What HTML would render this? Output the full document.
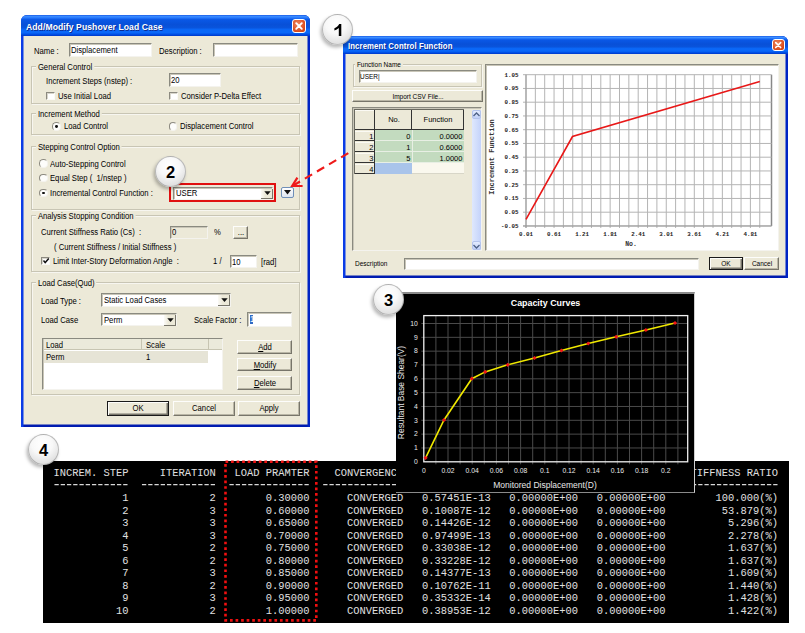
<!DOCTYPE html>
<html><head><meta charset="utf-8"><style>
html,body{margin:0;padding:0;background:#fff;}
#root{position:relative;width:805px;height:633px;overflow:hidden;background:#fff;font-family:'Liberation Sans',sans-serif;}
.b{position:absolute;box-sizing:border-box;margin:0;}
.t{position:absolute;white-space:nowrap;font-family:'Liberation Sans',sans-serif;}
.con{font-family:'Liberation Mono',monospace;font-size:10.42px;line-height:12.5px;color:#e0e0e0;}
.circ{position:absolute;box-sizing:border-box;border:1px solid rgba(120,120,120,0.45);border-radius:50%;background:radial-gradient(circle at 45% 30%,#ffffff 0%,#f8f8f8 40%,#e2e2e2 75%,#c4c4c4 100%);box-shadow:-1.5px 2.5px 3.5px rgba(0,0,0,0.28);display:flex;align-items:center;justify-content:center;}
.circ svg{position:absolute;}
.circ span{font-family:'Liberation Sans',sans-serif;font-weight:bold;font-size:17px;color:#000;line-height:1;display:inline-block;transform:translate(0.8px,0.8px) scaleX(0.97);}
</style></head><body><div id="root">
<div class="b" style="left:43px;top:461px;width:746.4px;height:162px;background:#000;"></div><pre class="b con" style="left:53.5px;top:467.25px;">INCREM. STEP     ITERATION   LOAD PRAMTER    CONVERGENCE                                             STIFFNESS RATIO</pre><svg class="b" style="left:0;top:0" width="805" height="633"><line x1="54.45" y1="484.6" x2="128.50" y2="484.6" stroke="#d8d8d8" stroke-width="1.3" stroke-dasharray="4.3 1.95"/><line x1="141.95" y1="484.6" x2="216.00" y2="484.6" stroke="#d8d8d8" stroke-width="1.3" stroke-dasharray="4.3 1.95"/><line x1="229.45" y1="484.6" x2="309.75" y2="484.6" stroke="#d8d8d8" stroke-width="1.3" stroke-dasharray="4.3 1.95"/><line x1="323.20" y1="484.6" x2="403.50" y2="484.6" stroke="#d8d8d8" stroke-width="1.3" stroke-dasharray="4.3 1.95"/><line x1="685.70" y1="484.6" x2="778.50" y2="484.6" stroke="#d8d8d8" stroke-width="1.3" stroke-dasharray="4.3 1.95"/></svg><pre class="b con" style="left:53.5px;top:492.25px;">           1             2        0.30000      CONVERGED   0.57451E-13   0.00000E+00   0.00000E+00        100.000(%)</pre><pre class="b con" style="left:53.5px;top:504.75px;">           2             3        0.60000      CONVERGED   0.10087E-12   0.00000E+00   0.00000E+00         53.879(%)</pre><pre class="b con" style="left:53.5px;top:517.25px;">           3             3        0.65000      CONVERGED   0.14426E-12   0.00000E+00   0.00000E+00          5.296(%)</pre><pre class="b con" style="left:53.5px;top:529.75px;">           4             3        0.70000      CONVERGED   0.97499E-13   0.00000E+00   0.00000E+00          2.278(%)</pre><pre class="b con" style="left:53.5px;top:542.25px;">           5             2        0.75000      CONVERGED   0.33038E-12   0.00000E+00   0.00000E+00          1.637(%)</pre><pre class="b con" style="left:53.5px;top:554.75px;">           6             2        0.80000      CONVERGED   0.33228E-12   0.00000E+00   0.00000E+00          1.637(%)</pre><pre class="b con" style="left:53.5px;top:567.25px;">           7             3        0.85000      CONVERGED   0.14377E-13   0.00000E+00   0.00000E+00          1.609(%)</pre><pre class="b con" style="left:53.5px;top:579.75px;">           8             2        0.90000      CONVERGED   0.10762E-11   0.00000E+00   0.00000E+00          1.440(%)</pre><pre class="b con" style="left:53.5px;top:592.25px;">           9             3        0.95000      CONVERGED   0.35332E-14   0.00000E+00   0.00000E+00          1.428(%)</pre><pre class="b con" style="left:53.5px;top:604.75px;">          10             2        1.00000      CONVERGED   0.38953E-12   0.00000E+00   0.00000E+00          1.422(%)</pre><svg class="b" style="left:0;top:0" width="805" height="633"><rect x="225.5" y="461.8" width="90.8" height="158.6" fill="none" stroke="#f01010" stroke-width="2.6" stroke-dasharray="2.7 2.85"/></svg><div class="b" style="left:396px;top:292px;width:299px;height:201px;background:#000;border-top:2px solid #8a8a8a;border-right:1.5px solid #cfcfcf;border-bottom:1.5px solid #8a8a8a;box-sizing:border-box;"></div><div class="t" style="left:445.5px;width:200px;text-align:center;top:298.16px;font-size:8.90px;line-height:10.68px;color:#fff;font-weight:bold;transform-origin:50% 50%;">Capacity Curves</div><svg class="b" style="left:0;top:0" width="805" height="633"><line x1="435.90" y1="315.6" x2="435.90" y2="464.3" stroke="#4a4a4a" stroke-width="1"/><line x1="448.00" y1="315.6" x2="448.00" y2="464.3" stroke="#4a4a4a" stroke-width="1"/><line x1="460.10" y1="315.6" x2="460.10" y2="464.3" stroke="#4a4a4a" stroke-width="1"/><line x1="472.20" y1="315.6" x2="472.20" y2="464.3" stroke="#4a4a4a" stroke-width="1"/><line x1="484.30" y1="315.6" x2="484.30" y2="464.3" stroke="#4a4a4a" stroke-width="1"/><line x1="496.40" y1="315.6" x2="496.40" y2="464.3" stroke="#4a4a4a" stroke-width="1"/><line x1="508.50" y1="315.6" x2="508.50" y2="464.3" stroke="#4a4a4a" stroke-width="1"/><line x1="520.60" y1="315.6" x2="520.60" y2="464.3" stroke="#4a4a4a" stroke-width="1"/><line x1="532.70" y1="315.6" x2="532.70" y2="464.3" stroke="#4a4a4a" stroke-width="1"/><line x1="544.80" y1="315.6" x2="544.80" y2="464.3" stroke="#4a4a4a" stroke-width="1"/><line x1="556.90" y1="315.6" x2="556.90" y2="464.3" stroke="#4a4a4a" stroke-width="1"/><line x1="569.00" y1="315.6" x2="569.00" y2="464.3" stroke="#4a4a4a" stroke-width="1"/><line x1="581.10" y1="315.6" x2="581.10" y2="464.3" stroke="#4a4a4a" stroke-width="1"/><line x1="593.20" y1="315.6" x2="593.20" y2="464.3" stroke="#4a4a4a" stroke-width="1"/><line x1="605.30" y1="315.6" x2="605.30" y2="464.3" stroke="#4a4a4a" stroke-width="1"/><line x1="617.40" y1="315.6" x2="617.40" y2="464.3" stroke="#4a4a4a" stroke-width="1"/><line x1="629.50" y1="315.6" x2="629.50" y2="464.3" stroke="#4a4a4a" stroke-width="1"/><line x1="641.60" y1="315.6" x2="641.60" y2="464.3" stroke="#4a4a4a" stroke-width="1"/><line x1="653.70" y1="315.6" x2="653.70" y2="464.3" stroke="#4a4a4a" stroke-width="1"/><line x1="665.80" y1="315.6" x2="665.80" y2="464.3" stroke="#4a4a4a" stroke-width="1"/><line x1="677.90" y1="315.6" x2="677.90" y2="464.3" stroke="#4a4a4a" stroke-width="1"/><line x1="421.3" y1="447.97" x2="687.7" y2="447.97" stroke="#4a4a4a" stroke-width="1"/><line x1="421.3" y1="434.14" x2="687.7" y2="434.14" stroke="#4a4a4a" stroke-width="1"/><line x1="421.3" y1="420.31" x2="687.7" y2="420.31" stroke="#4a4a4a" stroke-width="1"/><line x1="421.3" y1="406.48" x2="687.7" y2="406.48" stroke="#4a4a4a" stroke-width="1"/><line x1="421.3" y1="392.65" x2="687.7" y2="392.65" stroke="#4a4a4a" stroke-width="1"/><line x1="421.3" y1="378.82" x2="687.7" y2="378.82" stroke="#4a4a4a" stroke-width="1"/><line x1="421.3" y1="364.99" x2="687.7" y2="364.99" stroke="#4a4a4a" stroke-width="1"/><line x1="421.3" y1="351.16" x2="687.7" y2="351.16" stroke="#4a4a4a" stroke-width="1"/><line x1="421.3" y1="337.33" x2="687.7" y2="337.33" stroke="#4a4a4a" stroke-width="1"/><line x1="421.3" y1="323.50" x2="687.7" y2="323.50" stroke="#4a4a4a" stroke-width="1"/><rect x="423.8" y="315.6" width="263.90000000000003" height="146.2" fill="none" stroke="#f0f0f0" stroke-width="1.3"/><text x="417.8" y="464.10" text-anchor="end" font-size="6.8" font-family="Liberation Sans" fill="#e8e8e8">0</text><text x="417.8" y="450.27" text-anchor="end" font-size="6.8" font-family="Liberation Sans" fill="#e8e8e8">1</text><text x="417.8" y="436.44" text-anchor="end" font-size="6.8" font-family="Liberation Sans" fill="#e8e8e8">2</text><text x="417.8" y="422.61" text-anchor="end" font-size="6.8" font-family="Liberation Sans" fill="#e8e8e8">3</text><text x="417.8" y="408.78" text-anchor="end" font-size="6.8" font-family="Liberation Sans" fill="#e8e8e8">4</text><text x="417.8" y="394.95" text-anchor="end" font-size="6.8" font-family="Liberation Sans" fill="#e8e8e8">5</text><text x="417.8" y="381.12" text-anchor="end" font-size="6.8" font-family="Liberation Sans" fill="#e8e8e8">6</text><text x="417.8" y="367.29" text-anchor="end" font-size="6.8" font-family="Liberation Sans" fill="#e8e8e8">7</text><text x="417.8" y="353.46" text-anchor="end" font-size="6.8" font-family="Liberation Sans" fill="#e8e8e8">8</text><text x="417.8" y="339.63" text-anchor="end" font-size="6.8" font-family="Liberation Sans" fill="#e8e8e8">9</text><text x="417.8" y="325.80" text-anchor="end" font-size="6.8" font-family="Liberation Sans" fill="#e8e8e8">10</text><text x="423.80" y="472.7" text-anchor="middle" font-size="6.8" font-family="Liberation Sans" fill="#e8e8e8">0</text><text x="448.00" y="472.7" text-anchor="middle" font-size="6.8" font-family="Liberation Sans" fill="#e8e8e8">0.02</text><text x="472.20" y="472.7" text-anchor="middle" font-size="6.8" font-family="Liberation Sans" fill="#e8e8e8">0.04</text><text x="496.40" y="472.7" text-anchor="middle" font-size="6.8" font-family="Liberation Sans" fill="#e8e8e8">0.06</text><text x="520.60" y="472.7" text-anchor="middle" font-size="6.8" font-family="Liberation Sans" fill="#e8e8e8">0.08</text><text x="544.80" y="472.7" text-anchor="middle" font-size="6.8" font-family="Liberation Sans" fill="#e8e8e8">0.1</text><text x="569.00" y="472.7" text-anchor="middle" font-size="6.8" font-family="Liberation Sans" fill="#e8e8e8">0.12</text><text x="593.20" y="472.7" text-anchor="middle" font-size="6.8" font-family="Liberation Sans" fill="#e8e8e8">0.14</text><text x="617.40" y="472.7" text-anchor="middle" font-size="6.8" font-family="Liberation Sans" fill="#e8e8e8">0.16</text><text x="641.60" y="472.7" text-anchor="middle" font-size="6.8" font-family="Liberation Sans" fill="#e8e8e8">0.18</text><text x="665.80" y="472.7" text-anchor="middle" font-size="6.8" font-family="Liberation Sans" fill="#e8e8e8">0.2</text><text x="545" y="487.8" text-anchor="middle" font-size="8.5" font-family="Liberation Sans" fill="#e8e8e8">Monitored Displacement(D)</text><text transform="translate(404.3,392.5) rotate(-90)" text-anchor="middle" font-size="8.45" font-family="Liberation Sans" fill="#e8e8e8">Resultant Base Shear(V)</text><polyline points="425.6,457.8 444,420 471.8,378.7 485.2,371.9 507.7,364.8 534.5,358 561.4,350.5 588.2,343.5 616.2,336.8 645.9,330 675,323" fill="none" stroke="#f0e800" stroke-width="1.6"/><rect x="424.1" y="456.3" width="3" height="3" fill="#f01818" transform="rotate(45 425.6 457.8)"/><rect x="442.5" y="418.5" width="3" height="3" fill="#f01818" transform="rotate(45 444 420)"/><rect x="470.3" y="377.2" width="3" height="3" fill="#f01818" transform="rotate(45 471.8 378.7)"/><rect x="483.7" y="370.4" width="3" height="3" fill="#f01818" transform="rotate(45 485.2 371.9)"/><rect x="506.2" y="363.3" width="3" height="3" fill="#f01818" transform="rotate(45 507.7 364.8)"/><rect x="533.0" y="356.5" width="3" height="3" fill="#f01818" transform="rotate(45 534.5 358)"/><rect x="559.9" y="349.0" width="3" height="3" fill="#f01818" transform="rotate(45 561.4 350.5)"/><rect x="586.7" y="342.0" width="3" height="3" fill="#f01818" transform="rotate(45 588.2 343.5)"/><rect x="614.7" y="335.3" width="3" height="3" fill="#f01818" transform="rotate(45 616.2 336.8)"/><rect x="644.4" y="328.5" width="3" height="3" fill="#f01818" transform="rotate(45 645.9 330)"/><rect x="673.5" y="321.5" width="3" height="3" fill="#f01818" transform="rotate(45 675 323)"/></svg><div class="b" style="left:21px;top:15px;width:289px;height:412px;background:#ece9d8;border-radius:6px 6px 0 0;box-shadow:inset 2.5px 0 0 #0a3ce6, inset -2.5px 0 0 #0024c4, inset 0 -2.5px 0 #001cb0;"></div><div class="b" style="left:21px;top:15px;width:289px;height:21px;border-radius:6px 6px 0 0;background:linear-gradient(#1a5ce8 0%,#3d90ff 8%,#2a7cff 12%,#0a58e6 22%,#0850d8 45%,#0954dc 60%,#0a68f8 70%,#0a68f8 84%,#0050e6 92%,#0038c8 100%);"></div><div class="t" style="left:26px;top:20.84px;font-size:9.60px;line-height:11.52px;color:#fff;font-weight:bold;transform-origin:0 50%;text-shadow:1px 1px 0 #0a2a90;transform:scaleX(0.895);transform-origin:0 0;letter-spacing:0.1px;">Add/Modify Pushover Load Case</div><div class="b" style="left:292px;top:19px;width:14px;height:14px;border-radius:3px;background:radial-gradient(circle at 40% 35%,#f08a60,#d84a1c 70%,#c43c10);border:1px solid #fff;box-sizing:border-box;"></div><svg class="b" style="left:292px;top:19px" width="14" height="14"><path d="M4.2 4.2 L9.799999999999999 9.799999999999999 M9.799999999999999 4.2 L4.2 9.799999999999999" stroke="#fff" stroke-width="1.9" stroke-linecap="round"/></svg><div class="t" style="left:34px;top:46.59px;font-size:8.19px;line-height:9.83px;color:#000;transform:scaleX(0.94);transform-origin:0 50%;">Name :</div><div class="b" style="left:68.5px;top:43px;width:83.5px;height:14px;background:#fff;border-top:1px solid #8a8a80;border-left:1px solid #8a8a80;border-bottom:1px solid #f4f3ee;border-right:1px solid #f4f3ee;box-shadow:inset 1px 1px 0 #c9c6b8;"></div><div class="t" style="left:70.5px;top:46.29px;font-size:8.19px;line-height:9.83px;color:#000;transform:scaleX(0.94);transform-origin:0 50%;">Displacement</div><div class="t" style="left:159px;top:46.59px;font-size:8.19px;line-height:9.83px;color:#000;transform:scaleX(0.94);transform-origin:0 50%;">Description :</div><div class="b" style="left:213px;top:43px;width:85px;height:14px;background:#fff;border-top:1px solid #8a8a80;border-left:1px solid #8a8a80;border-bottom:1px solid #f4f3ee;border-right:1px solid #f4f3ee;box-shadow:inset 1px 1px 0 #c9c6b8;"></div><div class="b" style="left:31.4px;top:66.3px;width:268.6px;height:37.7px;border:1px solid #c8c5b4;box-shadow:inset 1px 1px 0 #f7f6f0, 1px 1px 0 #f7f6f0;"></div><div class="t" style="left:35.5px;top:63.09px;font-size:8.19px;line-height:9.83px;color:#000;transform:scaleX(0.94);transform-origin:0 50%;background:#ece9d8;padding:0 2px;">General Control</div><div class="t" style="left:46px;top:77.09px;font-size:8.19px;line-height:9.83px;color:#000;transform:scaleX(0.94);transform-origin:0 50%;">Increment Steps (nstep) :</div><div class="b" style="left:169px;top:73px;width:51.5px;height:14px;background:#fff;border-top:1px solid #8a8a80;border-left:1px solid #8a8a80;border-bottom:1px solid #f4f3ee;border-right:1px solid #f4f3ee;box-shadow:inset 1px 1px 0 #c9c6b8;"></div><div class="t" style="left:171px;top:76.29px;font-size:8.19px;line-height:9.83px;color:#000;transform:scaleX(0.94);transform-origin:0 50%;">20</div><div class="b" style="left:46px;top:91.75px;width:8.5px;height:8.5px;background:#fff;border-top:1.5px solid #8c8a80;border-left:1.5px solid #8c8a80;border-bottom:1px solid #fbfaf5;border-right:1px solid #fbfaf5;box-shadow:inset 1px 1px 0 #d8d6cc;"></div><div class="t" style="left:58px;top:92.09px;font-size:8.19px;line-height:9.83px;color:#000;transform:scaleX(0.94);transform-origin:0 50%;">Use Initial Load</div><div class="b" style="left:169px;top:91.75px;width:8.5px;height:8.5px;background:#fff;border-top:1.5px solid #8c8a80;border-left:1.5px solid #8c8a80;border-bottom:1px solid #fbfaf5;border-right:1px solid #fbfaf5;box-shadow:inset 1px 1px 0 #d8d6cc;"></div><div class="t" style="left:181px;top:92.09px;font-size:8.19px;line-height:9.83px;color:#000;transform:scaleX(0.94);transform-origin:0 50%;">Consider P-Delta Effect</div><div class="b" style="left:31.4px;top:113.3px;width:268.6px;height:22.200000000000003px;border:1px solid #c8c5b4;box-shadow:inset 1px 1px 0 #f7f6f0, 1px 1px 0 #f7f6f0;"></div><div class="t" style="left:35.5px;top:110.09px;font-size:8.19px;line-height:9.83px;color:#000;transform:scaleX(0.94);transform-origin:0 50%;background:#ece9d8;padding:0 2px;">Increment Method</div><div class="b" style="left:52.4px;top:122.05px;width:8.5px;height:8.500000000000014px;border-radius:50%;background:#fdfdfb;border-top:1.5px solid #8c8a80;border-left:1.5px solid #8c8a80;border-bottom:1px solid #f4f3ee;border-right:1px solid #f4f3ee;box-sizing:border-box;"></div><div class="b" style="left:55.4px;top:125.0px;width:2.799999999999997px;height:2.799999999999997px;border-radius:50%;background:#111;"></div><div class="t" style="left:64px;top:122.09px;font-size:8.19px;line-height:9.83px;color:#000;transform:scaleX(0.94);transform-origin:0 50%;">Load Control</div><div class="b" style="left:168.5px;top:122.05px;width:8.5px;height:8.500000000000014px;border-radius:50%;background:#fdfdfb;border-top:1.5px solid #8c8a80;border-left:1.5px solid #8c8a80;border-bottom:1px solid #f4f3ee;border-right:1px solid #f4f3ee;box-sizing:border-box;"></div><div class="t" style="left:180px;top:122.09px;font-size:8.19px;line-height:9.83px;color:#000;transform:scaleX(0.94);transform-origin:0 50%;">Displacement Control</div><div class="b" style="left:31.4px;top:146.3px;width:268.6px;height:63.69999999999999px;border:1px solid #c8c5b4;box-shadow:inset 1px 1px 0 #f7f6f0, 1px 1px 0 #f7f6f0;"></div><div class="t" style="left:35.5px;top:143.09px;font-size:8.19px;line-height:9.83px;color:#000;transform:scaleX(0.94);transform-origin:0 50%;background:#ece9d8;padding:0 2px;">Stepping Control Option</div><div class="b" style="left:39px;top:159.25px;width:8.5px;height:8.5px;border-radius:50%;background:#fdfdfb;border-top:1.5px solid #8c8a80;border-left:1.5px solid #8c8a80;border-bottom:1px solid #f4f3ee;border-right:1px solid #f4f3ee;box-sizing:border-box;"></div><div class="t" style="left:50px;top:159.59px;font-size:8.19px;line-height:9.83px;color:#000;transform:scaleX(0.94);transform-origin:0 50%;">Auto-Stepping Control</div><div class="b" style="left:39px;top:173.75px;width:8.5px;height:8.5px;border-radius:50%;background:#fdfdfb;border-top:1.5px solid #8c8a80;border-left:1.5px solid #8c8a80;border-bottom:1px solid #f4f3ee;border-right:1px solid #f4f3ee;box-sizing:border-box;"></div><div class="t" style="left:50px;top:174.09px;font-size:8.19px;line-height:9.83px;color:#000;transform:scaleX(0.94);transform-origin:0 50%;">Equal Step (&nbsp; 1/nstep )</div><div class="b" style="left:39px;top:188.75px;width:8.5px;height:8.5px;border-radius:50%;background:#fdfdfb;border-top:1.5px solid #8c8a80;border-left:1.5px solid #8c8a80;border-bottom:1px solid #f4f3ee;border-right:1px solid #f4f3ee;box-sizing:border-box;"></div><div class="b" style="left:42px;top:191.7px;width:2.799999999999997px;height:2.8000000000000114px;border-radius:50%;background:#111;"></div><div class="t" style="left:50px;top:189.09px;font-size:8.19px;line-height:9.83px;color:#000;transform:scaleX(0.94);transform-origin:0 50%;">Incremental Control Function :</div><div class="b" style="left:173px;top:187px;width:100px;height:12.5px;background:#fff;border-top:1px solid #8a8a80;border-left:1px solid #8a8a80;border-bottom:1px solid #f4f3ee;border-right:1px solid #f4f3ee;box-shadow:inset 1px 1px 0 #c9c6b8;"></div><div class="t" style="left:176px;top:189.34px;font-size:8.19px;line-height:9.83px;color:#000;transform:scaleX(0.94);transform-origin:0 50%;">USER</div><div class="b" style="left:260.5px;top:188.5px;width:12.0px;height:10.5px;background:linear-gradient(90deg,#fbfaf6,#ece9d8 40%);border-right:1.5px solid #77756a;border-bottom:1.5px solid #77756a;box-sizing:border-box;"></div><svg class="b" style="left:263.5px;top:191.45px" width="7" height="5"><path d="M0.3 0.3 L6.7 0.3 L3.5 4 Z" fill="#111"/></svg><div class="b" style="left:169px;top:183px;width:107px;height:18.5px;border:2px solid #e01010;box-sizing:border-box;"></div><div class="b" style="left:281px;top:186.5px;width:12.5px;height:11.0px;border-radius:2px;background:linear-gradient(#fff,#dfe6f0);border:1px solid #6f8fb8;box-sizing:border-box;"></div><svg class="b" style="left:284px;top:189.5px" width="7" height="5"><path d="M0 0 L7 0 L3.5 4.5 Z" fill="#111"/></svg><div class="b" style="left:31.4px;top:214.8px;width:268.6px;height:57.19999999999999px;border:1px solid #c8c5b4;box-shadow:inset 1px 1px 0 #f7f6f0, 1px 1px 0 #f7f6f0;"></div><div class="t" style="left:35.5px;top:211.59px;font-size:8.19px;line-height:9.83px;color:#000;transform:scaleX(0.94);transform-origin:0 50%;background:#ece9d8;padding:0 2px;">Analysis Stopping Condition</div><div class="t" style="left:41px;top:228.09px;font-size:8.19px;line-height:9.83px;color:#000;transform:scaleX(0.94);transform-origin:0 50%;">Current Stiffness Ratio (Cs)&nbsp; :</div><div class="b" style="left:170px;top:226px;width:38px;height:12.5px;background:#ece9d8;border-top:1px solid #8a8a80;border-left:1px solid #8a8a80;border-bottom:1px solid #f4f3ee;border-right:1px solid #f4f3ee;box-shadow:inset 1px 1px 0 #c9c6b8;"></div><div class="t" style="left:172px;top:228.29px;font-size:8.19px;line-height:9.83px;color:#000;transform:scaleX(0.94);transform-origin:0 50%;">0</div><div class="t" style="left:214px;top:228.09px;font-size:8.19px;line-height:9.83px;color:#000;transform:scaleX(0.94);transform-origin:0 50%;">%</div><div class="b" style="left:233px;top:226px;width:15px;height:12.5px;background:#ece9d8;border-top:1px solid #fdfdfb;border-left:1px solid #fdfdfb;border-bottom:1.5px solid #77756a;border-right:1.5px solid #77756a;box-shadow:inset -1px -1px 0 #b9b6a6;"></div><div class="t" style="left:140.5px;width:200px;text-align:center;top:228.34px;font-size:8.19px;line-height:9.83px;color:#000;transform:scaleX(0.94);transform-origin:50% 50%;">...</div><div class="t" style="left:53.5px;top:243.09px;font-size:8.19px;line-height:9.83px;color:#000;transform:scaleX(0.94);transform-origin:0 50%;">( Current Stiffness / Initial Stiffness )</div><div class="b" style="left:41px;top:256.95px;width:8.5px;height:8.5px;background:#fff;border-top:1.5px solid #8c8a80;border-left:1.5px solid #8c8a80;border-bottom:1px solid #fbfaf5;border-right:1px solid #fbfaf5;box-shadow:inset 1px 1px 0 #d8d6cc;"></div><svg class="b" style="left:42px;top:257.2px" width="8" height="8"><path d="M1.5 3.5 L3.2 5.6 L6.8 1.6" stroke="#111" stroke-width="1.5" fill="none"/></svg><div class="t" style="left:52.8px;top:256.69px;font-size:8.19px;line-height:9.83px;color:#000;transform:scaleX(0.94);transform-origin:0 50%;">Limit Inter-Story Deformation Angle&nbsp; :</div><div class="t" style="left:213px;top:257.09px;font-size:8.19px;line-height:9.83px;color:#000;transform:scaleX(0.94);transform-origin:0 50%;">1 /</div><div class="b" style="left:230px;top:255px;width:27px;height:13px;background:#fff;border-top:1px solid #8a8a80;border-left:1px solid #8a8a80;border-bottom:1px solid #f4f3ee;border-right:1px solid #f4f3ee;box-shadow:inset 1px 1px 0 #c9c6b8;"></div><div class="t" style="left:232px;top:257.59px;font-size:8.19px;line-height:9.83px;color:#000;transform:scaleX(0.94);transform-origin:0 50%;">10</div><div class="t" style="left:260.5px;top:257.59px;font-size:8.19px;line-height:9.83px;color:#000;transform:scaleX(0.94);transform-origin:0 50%;">[rad]</div><div class="b" style="left:31.4px;top:281.8px;width:268.6px;height:113.19999999999999px;border:1px solid #c8c5b4;box-shadow:inset 1px 1px 0 #f7f6f0, 1px 1px 0 #f7f6f0;"></div><div class="t" style="left:35.5px;top:278.59px;font-size:8.19px;line-height:9.83px;color:#000;transform:scaleX(0.94);transform-origin:0 50%;background:#ece9d8;padding:0 2px;">Load Case(Qud)</div><div class="t" style="left:41px;top:296.69px;font-size:8.19px;line-height:9.83px;color:#000;transform:scaleX(0.94);transform-origin:0 50%;">Load Type :</div><div class="b" style="left:100.5px;top:293.3px;width:130.1px;height:13.699999999999989px;background:#fff;border-top:1px solid #8a8a80;border-left:1px solid #8a8a80;border-bottom:1px solid #f4f3ee;border-right:1px solid #f4f3ee;box-shadow:inset 1px 1px 0 #c9c6b8;"></div><div class="t" style="left:103.5px;top:296.24px;font-size:8.19px;line-height:9.83px;color:#000;transform:scaleX(0.94);transform-origin:0 50%;">Static Load Cases</div><div class="b" style="left:218.1px;top:294.8px;width:12.0px;height:11.699999999999989px;background:linear-gradient(90deg,#fbfaf6,#ece9d8 40%);border-right:1.5px solid #77756a;border-bottom:1.5px solid #77756a;box-sizing:border-box;"></div><svg class="b" style="left:221.1px;top:298.34999999999997px" width="7" height="5"><path d="M0.3 0.3 L6.7 0.3 L3.5 4 Z" fill="#111"/></svg><div class="t" style="left:41px;top:316.49px;font-size:8.19px;line-height:9.83px;color:#000;transform:scaleX(0.94);transform-origin:0 50%;">Load Case</div><div class="b" style="left:100.5px;top:313.2px;width:76.0px;height:13.300000000000011px;background:#fff;border-top:1px solid #8a8a80;border-left:1px solid #8a8a80;border-bottom:1px solid #f4f3ee;border-right:1px solid #f4f3ee;box-shadow:inset 1px 1px 0 #c9c6b8;"></div><div class="t" style="left:103.5px;top:315.94px;font-size:8.19px;line-height:9.83px;color:#000;transform:scaleX(0.94);transform-origin:0 50%;">Perm</div><div class="b" style="left:164.0px;top:314.7px;width:12.0px;height:11.300000000000011px;background:linear-gradient(90deg,#fbfaf6,#ece9d8 40%);border-right:1.5px solid #77756a;border-bottom:1.5px solid #77756a;box-sizing:border-box;"></div><svg class="b" style="left:167.0px;top:318.05px" width="7" height="5"><path d="M0.3 0.3 L6.7 0.3 L3.5 4 Z" fill="#111"/></svg><div class="t" style="left:194px;top:316.49px;font-size:8.19px;line-height:9.83px;color:#000;transform:scaleX(0.94);transform-origin:0 50%;">Scale Factor :</div><div class="b" style="left:247px;top:312px;width:45px;height:14.699999999999989px;background:#fff;border-top:1px solid #8a8a80;border-left:1px solid #8a8a80;border-bottom:1px solid #f4f3ee;border-right:1px solid #f4f3ee;box-shadow:inset 1px 1px 0 #c9c6b8;"></div><div class="b" style="left:249.5px;top:315px;width:3.5px;height:9px;background:#316ac5;"></div><div class="t" style="left:250px;top:314.59px;font-size:8.19px;line-height:9.83px;color:#fff;transform:scaleX(0.94);transform-origin:0 50%;">1</div><div class="b" style="left:42.4px;top:337.5px;width:180.6px;height:52.10000000000002px;background:#fff;border-top:1px solid #8a8a80;border-left:1px solid #8a8a80;border-bottom:1px solid #f4f3ee;border-right:1px solid #f4f3ee;box-shadow:inset 1px 1px 0 #c9c6b8;"></div><div class="b" style="left:43.5px;top:338.5px;width:178.5px;height:11.5px;background:#ebeadb;border-bottom:1px solid #c7c5b2;"></div><div class="b" style="left:141px;top:339px;width:1px;height:11px;background:#c7c5b2;"></div><div class="b" style="left:208px;top:339px;width:1px;height:11px;background:#c7c5b2;"></div><div class="t" style="left:46px;top:340.59px;font-size:8.19px;line-height:9.83px;color:#000;transform:scaleX(0.94);transform-origin:0 50%;">Load</div><div class="t" style="left:146px;top:340.59px;font-size:8.19px;line-height:9.83px;color:#000;transform:scaleX(0.94);transform-origin:0 50%;">Scale</div><div class="b" style="left:43.5px;top:351px;width:164.5px;height:11.5px;background:#e6e4d6;"></div><div class="t" style="left:46px;top:352.89px;font-size:8.19px;line-height:9.83px;color:#000;transform:scaleX(0.94);transform-origin:0 50%;">Perm</div><div class="t" style="left:146px;top:352.89px;font-size:8.19px;line-height:9.83px;color:#000;transform:scaleX(0.94);transform-origin:0 50%;">1</div><div class="b" style="left:237px;top:340px;width:55px;height:14px;background:#ece9d8;border-top:1px solid #fdfdfb;border-left:1px solid #fdfdfb;border-bottom:1.5px solid #77756a;border-right:1.5px solid #77756a;box-shadow:inset -1px -1px 0 #b9b6a6;"></div><div class="t" style="left:164.5px;width:200px;text-align:center;top:343.09px;font-size:8.19px;line-height:9.83px;color:#000;transform:scaleX(0.94);transform-origin:50% 50%;"><u>A</u>dd</div><div class="b" style="left:237px;top:357.7px;width:55px;height:13.800000000000011px;background:#ece9d8;border-top:1px solid #fdfdfb;border-left:1px solid #fdfdfb;border-bottom:1.5px solid #77756a;border-right:1.5px solid #77756a;box-shadow:inset -1px -1px 0 #b9b6a6;"></div><div class="t" style="left:164.5px;width:200px;text-align:center;top:360.69px;font-size:8.19px;line-height:9.83px;color:#000;transform:scaleX(0.94);transform-origin:50% 50%;"><u>M</u>odify</div><div class="b" style="left:237px;top:375.5px;width:55px;height:14.100000000000023px;background:#ece9d8;border-top:1px solid #fdfdfb;border-left:1px solid #fdfdfb;border-bottom:1.5px solid #77756a;border-right:1.5px solid #77756a;box-shadow:inset -1px -1px 0 #b9b6a6;"></div><div class="t" style="left:164.5px;width:200px;text-align:center;top:378.64px;font-size:8.19px;line-height:9.83px;color:#000;transform:scaleX(0.94);transform-origin:50% 50%;"><u>D</u>elete</div><div class="b" style="left:106.5px;top:400.8px;width:62.5px;height:14.899999999999977px;background:#ece9d8;border:1px solid #1a1a1a;box-shadow:inset 1px 1px 0 #fdfdfb, inset -1.5px -1.5px 0 #77756a;"></div><div class="t" style="left:37.75px;width:200px;text-align:center;top:404.34px;font-size:8.19px;line-height:9.83px;color:#000;transform:scaleX(0.94);transform-origin:50% 50%;">OK</div><div class="b" style="left:173px;top:400.8px;width:62px;height:14.899999999999977px;background:#ece9d8;border-top:1px solid #fdfdfb;border-left:1px solid #fdfdfb;border-bottom:1.5px solid #77756a;border-right:1.5px solid #77756a;box-shadow:inset -1px -1px 0 #b9b6a6;"></div><div class="t" style="left:104.0px;width:200px;text-align:center;top:404.34px;font-size:8.19px;line-height:9.83px;color:#000;transform:scaleX(0.94);transform-origin:50% 50%;">Cancel</div><div class="b" style="left:238px;top:400.8px;width:61.5px;height:14.899999999999977px;background:#ece9d8;border-top:1px solid #fdfdfb;border-left:1px solid #fdfdfb;border-bottom:1.5px solid #77756a;border-right:1.5px solid #77756a;box-shadow:inset -1px -1px 0 #b9b6a6;"></div><div class="t" style="left:168.75px;width:200px;text-align:center;top:404.34px;font-size:8.19px;line-height:9.83px;color:#000;transform:scaleX(0.94);transform-origin:50% 50%;">Apply</div><div class="b" style="left:343px;top:36px;width:445px;height:241.5px;background:#ece9d8;border-radius:6px 6px 0 0;box-shadow:inset 2.5px 0 0 #0a3ce6, inset -2.5px 0 0 #0024c4, inset 0 -2.5px 0 #001cb0;"></div><div class="b" style="left:343px;top:36px;width:445px;height:18px;border-radius:6px 6px 0 0;background:linear-gradient(#1a5ce8 0%,#3d90ff 8%,#2a7cff 12%,#0a58e6 22%,#0850d8 45%,#0954dc 60%,#0a68f8 70%,#0a68f8 84%,#0050e6 92%,#0038c8 100%);"></div><div class="t" style="left:347.8px;top:41.36px;font-size:8.40px;line-height:10.08px;color:#fff;font-weight:bold;transform-origin:0 50%;text-shadow:1px 1px 0 #0a2a90;transform:scaleX(0.93);transform-origin:0 0;letter-spacing:0.1px;">Increment Control Function</div><div class="b" style="left:772.4px;top:39.3px;width:12.399999999999977px;height:12.200000000000003px;border-radius:3px;background:radial-gradient(circle at 40% 35%,#f08a60,#d84a1c 70%,#c43c10);border:1px solid #fff;box-sizing:border-box;"></div><svg class="b" style="left:772.4px;top:39.3px" width="12.399999999999977" height="12.200000000000003"><path d="M3.719999999999993 3.6600000000000006 L8.679999999999984 8.540000000000001 M8.679999999999984 3.6600000000000006 L3.719999999999993 8.540000000000001" stroke="#fff" stroke-width="1.6" stroke-linecap="round"/></svg><div class="b" style="left:352.7px;top:64.3px;width:129.7px;height:22.700000000000003px;border:1px solid #c8c5b4;box-shadow:inset 1px 1px 0 #f7f6f0, 1px 1px 0 #f7f6f0;"></div><div class="t" style="left:355.4px;top:calc(-0.8px + 61.85px);font-size:6.91px;line-height:8.30px;color:#000;transform:scaleX(0.94);transform-origin:0 50%;background:#ece9d8;padding:0 2px;">Function Name</div><div class="b" style="left:358.5px;top:70px;width:118.5px;height:13px;background:#fff;border-top:1px solid #8a8a80;border-left:1px solid #8a8a80;border-bottom:1px solid #f4f3ee;border-right:1px solid #f4f3ee;box-shadow:inset 1px 1px 0 #c9c6b8;"></div><div class="t" style="left:360px;top:73.35px;font-size:6.91px;line-height:8.30px;color:#000;transform:scaleX(0.94);transform-origin:0 50%;">USER|</div><div class="b" style="left:352.3px;top:90px;width:130.5px;height:12.400000000000006px;background:#ece9d8;border-top:1px solid #fdfdfb;border-left:1px solid #fdfdfb;border-bottom:1.5px solid #77756a;border-right:1.5px solid #77756a;box-shadow:inset -1px -1px 0 #b9b6a6;"></div><div class="t" style="left:317.55px;width:200px;text-align:center;top:93.05px;font-size:6.91px;line-height:8.30px;color:#000;transform:scaleX(0.94);transform-origin:50% 50%;">Import CSV File...</div><div class="b" style="left:352px;top:106.5px;width:130px;height:144.0px;background:#ece9d8;border-top:1px solid #8a8a80;border-left:1px solid #8a8a80;border-bottom:1px solid #f4f3ee;border-right:1px solid #f4f3ee;box-shadow:inset 1px 1px 0 #c9c6b8;"></div><div class="b" style="left:353.5px;top:108.5px;width:21.5px;height:21.5px;background:#ece9d8;border-right:1px solid #333;border-bottom:1px solid #333;box-sizing:border-box;"></div><div class="b" style="left:375px;top:108.5px;width:37px;height:21.5px;background:#ece9d8;border-right:1px solid #333;border-bottom:1px solid #333;box-sizing:border-box;"></div><div class="b" style="left:412px;top:108.5px;width:52px;height:21.5px;background:#ece9d8;border-right:1px solid #333;border-bottom:1px solid #333;box-sizing:border-box;"></div><div class="t" style="left:293.5px;width:200px;text-align:center;top:115.21px;font-size:7.98px;line-height:9.57px;color:#000;transform:scaleX(0.94);transform-origin:50% 50%;">No.</div><div class="t" style="left:338.0px;width:200px;text-align:center;top:115.21px;font-size:7.98px;line-height:9.57px;color:#000;transform:scaleX(0.94);transform-origin:50% 50%;">Function</div><div class="b" style="left:353.5px;top:130px;width:21.5px;height:11.400000000000006px;background:#ece9d8;border-right:1px solid #333;border-bottom:1px solid #333;box-sizing:border-box;"></div><div class="b" style="left:375px;top:130px;width:89px;height:11.400000000000006px;background:#c3dbbf;"></div><div class="b" style="left:412px;top:130px;width:1px;height:11.400000000000006px;background:#e8efe4;"></div><div class="b" style="left:375px;top:140.4px;width:89px;height:1.0px;background:#e8efe4;"></div><div class="t" style="right:432px;top:131.91px;font-size:7.98px;line-height:9.57px;color:#000;transform:scaleX(0.94);transform-origin:100% 50%;">1</div><div class="t" style="right:395px;top:131.91px;font-size:7.98px;line-height:9.57px;color:#000;transform:scaleX(0.94);transform-origin:100% 50%;">0</div><div class="t" style="right:343px;top:131.91px;font-size:7.98px;line-height:9.57px;color:#000;transform:scaleX(0.94);transform-origin:100% 50%;">0.0000</div><div class="b" style="left:353.5px;top:141.4px;width:21.5px;height:10.900000000000006px;background:#ece9d8;border-right:1px solid #333;border-bottom:1px solid #333;box-sizing:border-box;"></div><div class="b" style="left:375px;top:141.4px;width:89px;height:10.900000000000006px;background:#c3dbbf;"></div><div class="b" style="left:412px;top:141.4px;width:1px;height:10.900000000000006px;background:#e8efe4;"></div><div class="b" style="left:375px;top:151.3px;width:89px;height:1.0px;background:#e8efe4;"></div><div class="t" style="right:432px;top:143.06px;font-size:7.98px;line-height:9.57px;color:#000;transform:scaleX(0.94);transform-origin:100% 50%;">2</div><div class="t" style="right:395px;top:143.06px;font-size:7.98px;line-height:9.57px;color:#000;transform:scaleX(0.94);transform-origin:100% 50%;">1</div><div class="t" style="right:343px;top:143.06px;font-size:7.98px;line-height:9.57px;color:#000;transform:scaleX(0.94);transform-origin:100% 50%;">0.6000</div><div class="b" style="left:353.5px;top:152.3px;width:21.5px;height:10.699999999999989px;background:#ece9d8;border-right:1px solid #333;border-bottom:1px solid #333;box-sizing:border-box;"></div><div class="b" style="left:375px;top:152.3px;width:89px;height:10.699999999999989px;background:#c3dbbf;"></div><div class="b" style="left:412px;top:152.3px;width:1px;height:10.699999999999989px;background:#e8efe4;"></div><div class="b" style="left:375px;top:162px;width:89px;height:1px;background:#e8efe4;"></div><div class="t" style="right:432px;top:153.86px;font-size:7.98px;line-height:9.57px;color:#000;transform:scaleX(0.94);transform-origin:100% 50%;">3</div><div class="t" style="right:395px;top:153.86px;font-size:7.98px;line-height:9.57px;color:#000;transform:scaleX(0.94);transform-origin:100% 50%;">5</div><div class="t" style="right:343px;top:153.86px;font-size:7.98px;line-height:9.57px;color:#000;transform:scaleX(0.94);transform-origin:100% 50%;">1.0000</div><div class="b" style="left:353.5px;top:163px;width:21.5px;height:11.300000000000011px;background:#ece9d8;border-right:1px solid #333;border-bottom:1px solid #333;box-sizing:border-box;"></div><div class="b" style="left:375px;top:163px;width:37px;height:11.300000000000011px;background:#a9c4ea;"></div><div class="b" style="left:412px;top:163px;width:52px;height:11.300000000000011px;background:#faf8ee;border-bottom:1px solid #d8d6c8;box-sizing:border-box;"></div><div class="t" style="right:432px;top:164.86px;font-size:7.98px;line-height:9.57px;color:#000;transform:scaleX(0.94);transform-origin:100% 50%;">4</div><div class="b" style="left:353.5px;top:108.5px;width:1.0px;height:65.80000000000001px;background:#6a6a60;"></div><div class="b" style="left:353.5px;top:108.5px;width:110.5px;height:1.0px;background:#6a6a60;"></div><div class="b" style="left:354.5px;top:109.5px;width:19.5px;height:1.0px;background:#fbfaf4;"></div><div class="b" style="left:354.5px;top:131px;width:19.5px;height:1px;background:#fbfaf4;"></div><div class="b" style="left:354.5px;top:142.4px;width:19.5px;height:1.0px;background:#fbfaf4;"></div><div class="b" style="left:354.5px;top:153.3px;width:19.5px;height:1.0px;background:#fbfaf4;"></div><div class="b" style="left:354.5px;top:164px;width:19.5px;height:1px;background:#fbfaf4;"></div><div class="b" style="left:471.5px;top:109.6px;width:9.199999999999989px;height:140.4px;background:linear-gradient(90deg,#dfe8fd,#c4d3fb);border-radius:1px;"></div><div class="b" style="left:471.5px;top:109.6px;width:9.199999999999989px;height:9.400000000000006px;background:linear-gradient(#e4ecfe,#c0d0f8);border:1px solid #b4c4ec;box-sizing:border-box;border-radius:2px;"></div><div class="b" style="left:471.5px;top:241px;width:9.199999999999989px;height:9px;background:linear-gradient(#e4ecfe,#c0d0f8);border:1px solid #b4c4ec;box-sizing:border-box;border-radius:2px;"></div><svg class="b" style="left:473px;top:112px" width="7" height="5"><path d="M0.5 4 L3.5 1 L6.5 4" stroke="#4d6185" stroke-width="1.3" fill="none"/></svg><svg class="b" style="left:473px;top:243.5px" width="7" height="5"><path d="M0.5 1 L3.5 4 L6.5 1" stroke="#4d6185" stroke-width="1.3" fill="none"/></svg><div class="t" style="left:355.4px;top:260.15px;font-size:6.91px;line-height:8.30px;color:#000;transform:scaleX(0.94);transform-origin:0 50%;">Description</div><div class="b" style="left:404px;top:257.5px;width:295.4px;height:12.0px;background:#fff;border-top:1px solid #8a8a80;border-left:1px solid #8a8a80;border-bottom:1px solid #f4f3ee;border-right:1px solid #f4f3ee;box-shadow:inset 1px 1px 0 #c9c6b8;"></div><div class="b" style="left:708.7px;top:257px;width:34.299999999999955px;height:12.5px;background:#ece9d8;border:1px solid #1a1a1a;box-shadow:inset 1px 1px 0 #fdfdfb, inset -1.5px -1.5px 0 #77756a;"></div><div class="t" style="left:625.85px;width:200px;text-align:center;top:260.10px;font-size:6.91px;line-height:8.30px;color:#000;transform:scaleX(0.94);transform-origin:50% 50%;">OK</div><div class="b" style="left:744.4px;top:257px;width:34.200000000000045px;height:12.5px;background:#ece9d8;border-top:1px solid #fdfdfb;border-left:1px solid #fdfdfb;border-bottom:1.5px solid #77756a;border-right:1.5px solid #77756a;box-shadow:inset -1px -1px 0 #b9b6a6;"></div><div class="t" style="left:661.5px;width:200px;text-align:center;top:260.10px;font-size:6.91px;line-height:8.30px;color:#000;transform:scaleX(0.94);transform-origin:50% 50%;">Cancel</div><div class="b" style="left:485px;top:64.2px;width:293.6px;height:187.10000000000002px;background:#fff;border-top:1px solid #8a8a80;border-left:1px solid #8a8a80;border-bottom:1px solid #f4f3ee;border-right:1px solid #f4f3ee;box-shadow:inset 1px 1px 0 #c9c6b8;"></div><svg class="b" style="left:0;top:0" width="805" height="633"><rect x="526" y="74.7" width="245.5" height="151.3" fill="#fff"/><line x1="526.00" y1="74.7" x2="526.00" y2="228" stroke="#b4b4b4" stroke-width="1"/><line x1="535.35" y1="74.7" x2="535.35" y2="228" stroke="#b4b4b4" stroke-width="1"/><line x1="544.70" y1="74.7" x2="544.70" y2="228" stroke="#b4b4b4" stroke-width="1"/><line x1="554.05" y1="74.7" x2="554.05" y2="228" stroke="#b4b4b4" stroke-width="1"/><line x1="563.40" y1="74.7" x2="563.40" y2="228" stroke="#b4b4b4" stroke-width="1"/><line x1="572.75" y1="74.7" x2="572.75" y2="228" stroke="#b4b4b4" stroke-width="1"/><line x1="582.10" y1="74.7" x2="582.10" y2="228" stroke="#b4b4b4" stroke-width="1"/><line x1="591.45" y1="74.7" x2="591.45" y2="228" stroke="#b4b4b4" stroke-width="1"/><line x1="600.80" y1="74.7" x2="600.80" y2="228" stroke="#b4b4b4" stroke-width="1"/><line x1="610.15" y1="74.7" x2="610.15" y2="228" stroke="#b4b4b4" stroke-width="1"/><line x1="619.50" y1="74.7" x2="619.50" y2="228" stroke="#b4b4b4" stroke-width="1"/><line x1="628.85" y1="74.7" x2="628.85" y2="228" stroke="#b4b4b4" stroke-width="1"/><line x1="638.20" y1="74.7" x2="638.20" y2="228" stroke="#b4b4b4" stroke-width="1"/><line x1="647.55" y1="74.7" x2="647.55" y2="228" stroke="#b4b4b4" stroke-width="1"/><line x1="656.90" y1="74.7" x2="656.90" y2="228" stroke="#b4b4b4" stroke-width="1"/><line x1="666.25" y1="74.7" x2="666.25" y2="228" stroke="#b4b4b4" stroke-width="1"/><line x1="675.60" y1="74.7" x2="675.60" y2="228" stroke="#b4b4b4" stroke-width="1"/><line x1="684.95" y1="74.7" x2="684.95" y2="228" stroke="#b4b4b4" stroke-width="1"/><line x1="694.30" y1="74.7" x2="694.30" y2="228" stroke="#b4b4b4" stroke-width="1"/><line x1="703.65" y1="74.7" x2="703.65" y2="228" stroke="#b4b4b4" stroke-width="1"/><line x1="713.00" y1="74.7" x2="713.00" y2="228" stroke="#b4b4b4" stroke-width="1"/><line x1="722.35" y1="74.7" x2="722.35" y2="228" stroke="#b4b4b4" stroke-width="1"/><line x1="731.70" y1="74.7" x2="731.70" y2="228" stroke="#b4b4b4" stroke-width="1"/><line x1="741.05" y1="74.7" x2="741.05" y2="228" stroke="#b4b4b4" stroke-width="1"/><line x1="750.40" y1="74.7" x2="750.40" y2="228" stroke="#b4b4b4" stroke-width="1"/><line x1="759.75" y1="74.7" x2="759.75" y2="228" stroke="#b4b4b4" stroke-width="1"/><line x1="771.5" y1="74.7" x2="771.5" y2="226" stroke="#888" stroke-width="1.5"/><line x1="523" y1="74.70" x2="771.5" y2="74.70" stroke="#b4b4b4" stroke-width="1"/><line x1="523" y1="88.45" x2="771.5" y2="88.45" stroke="#b4b4b4" stroke-width="1"/><line x1="523" y1="102.20" x2="771.5" y2="102.20" stroke="#b4b4b4" stroke-width="1"/><line x1="523" y1="115.95" x2="771.5" y2="115.95" stroke="#b4b4b4" stroke-width="1"/><line x1="523" y1="129.70" x2="771.5" y2="129.70" stroke="#b4b4b4" stroke-width="1"/><line x1="523" y1="143.45" x2="771.5" y2="143.45" stroke="#b4b4b4" stroke-width="1"/><line x1="523" y1="157.20" x2="771.5" y2="157.20" stroke="#b4b4b4" stroke-width="1"/><line x1="523" y1="170.95" x2="771.5" y2="170.95" stroke="#b4b4b4" stroke-width="1"/><line x1="523" y1="184.70" x2="771.5" y2="184.70" stroke="#b4b4b4" stroke-width="1"/><line x1="523" y1="198.45" x2="771.5" y2="198.45" stroke="#b4b4b4" stroke-width="1"/><line x1="523" y1="212.20" x2="771.5" y2="212.20" stroke="#b4b4b4" stroke-width="1"/><line x1="523" y1="225.95" x2="771.5" y2="225.95" stroke="#b4b4b4" stroke-width="1"/><line x1="526" y1="74.7" x2="526" y2="228" stroke="#999" stroke-width="1"/><line x1="523" y1="226" x2="771.5" y2="226" stroke="#999" stroke-width="1"/><text x="518.5" y="76.70" text-anchor="end" font-size="5.8" font-family="Liberation Mono" font-weight="bold" fill="#222">1.05</text><text x="518.5" y="90.45" text-anchor="end" font-size="5.8" font-family="Liberation Mono" font-weight="bold" fill="#222">0.95</text><text x="518.5" y="104.20" text-anchor="end" font-size="5.8" font-family="Liberation Mono" font-weight="bold" fill="#222">0.85</text><text x="518.5" y="117.95" text-anchor="end" font-size="5.8" font-family="Liberation Mono" font-weight="bold" fill="#222">0.75</text><text x="518.5" y="131.70" text-anchor="end" font-size="5.8" font-family="Liberation Mono" font-weight="bold" fill="#222">0.65</text><text x="518.5" y="145.45" text-anchor="end" font-size="5.8" font-family="Liberation Mono" font-weight="bold" fill="#222">0.55</text><text x="518.5" y="159.20" text-anchor="end" font-size="5.8" font-family="Liberation Mono" font-weight="bold" fill="#222">0.45</text><text x="518.5" y="172.95" text-anchor="end" font-size="5.8" font-family="Liberation Mono" font-weight="bold" fill="#222">0.35</text><text x="518.5" y="186.70" text-anchor="end" font-size="5.8" font-family="Liberation Mono" font-weight="bold" fill="#222">0.25</text><text x="518.5" y="200.45" text-anchor="end" font-size="5.8" font-family="Liberation Mono" font-weight="bold" fill="#222">0.15</text><text x="518.5" y="214.20" text-anchor="end" font-size="5.8" font-family="Liberation Mono" font-weight="bold" fill="#222">0.05</text><text x="518.5" y="227.95" text-anchor="end" font-size="5.8" font-family="Liberation Mono" font-weight="bold" fill="#222">-0.05</text><text x="526.00" y="236" text-anchor="middle" font-size="5.8" font-family="Liberation Mono" font-weight="bold" fill="#222">0.01</text><text x="554.05" y="236" text-anchor="middle" font-size="5.8" font-family="Liberation Mono" font-weight="bold" fill="#222">0.61</text><text x="582.10" y="236" text-anchor="middle" font-size="5.8" font-family="Liberation Mono" font-weight="bold" fill="#222">1.21</text><text x="610.15" y="236" text-anchor="middle" font-size="5.8" font-family="Liberation Mono" font-weight="bold" fill="#222">1.81</text><text x="638.20" y="236" text-anchor="middle" font-size="5.8" font-family="Liberation Mono" font-weight="bold" fill="#222">2.41</text><text x="666.25" y="236" text-anchor="middle" font-size="5.8" font-family="Liberation Mono" font-weight="bold" fill="#222">3.01</text><text x="694.30" y="236" text-anchor="middle" font-size="5.8" font-family="Liberation Mono" font-weight="bold" fill="#222">3.61</text><text x="722.35" y="236" text-anchor="middle" font-size="5.8" font-family="Liberation Mono" font-weight="bold" fill="#222">4.21</text><text x="750.40" y="236" text-anchor="middle" font-size="5.8" font-family="Liberation Mono" font-weight="bold" fill="#222">4.81</text><text x="631" y="245.5" text-anchor="middle" font-size="6.5" font-family="Liberation Mono" font-weight="bold" fill="#333">No.</text><text transform="translate(493.8,157) rotate(-90)" text-anchor="middle" font-size="7" font-family="Liberation Mono" font-weight="bold" fill="#333">Increment Function</text><polyline points="526,219.3 572.5,136.5 759.8,81.6" fill="none" stroke="#e81818" stroke-width="1.6"/></svg><div class="circ" style="left:322.0px;top:13.5px;width:31px;height:31px;"><svg width="31" height="31" style="position:absolute;left:-1px;top:-1px"><path d="M19.3 10 L19.3 22 L16.8 22 L16.8 13.9 Q15 15.6 12.4 16.4 L12.4 14.2 Q14 13.6 15.3 12.4 Q16.6 11.2 17.2 10 Z" fill="#000"/></svg></div><div class="circ" style="left:154.5px;top:156.0px;width:31px;height:31px;"><span>2</span></div><div class="circ" style="left:372.5px;top:283.5px;width:31px;height:31px;"><span>3</span></div><div class="circ" style="left:27.5px;top:434.0px;width:31px;height:31px;"><span>4</span></div><svg class="b" style="left:0;top:0" width="805" height="633"><path d="M348.3 153.1 L292 186.2" stroke="#ee1a1a" stroke-width="2.15" stroke-dasharray="8.35 5.65" fill="none"/><path d="M297.4 177.6 L292.2 186 L302.6 186" stroke="#ee1a1a" stroke-width="2.2" fill="none" stroke-linejoin="miter"/></svg>
</div></body></html>
